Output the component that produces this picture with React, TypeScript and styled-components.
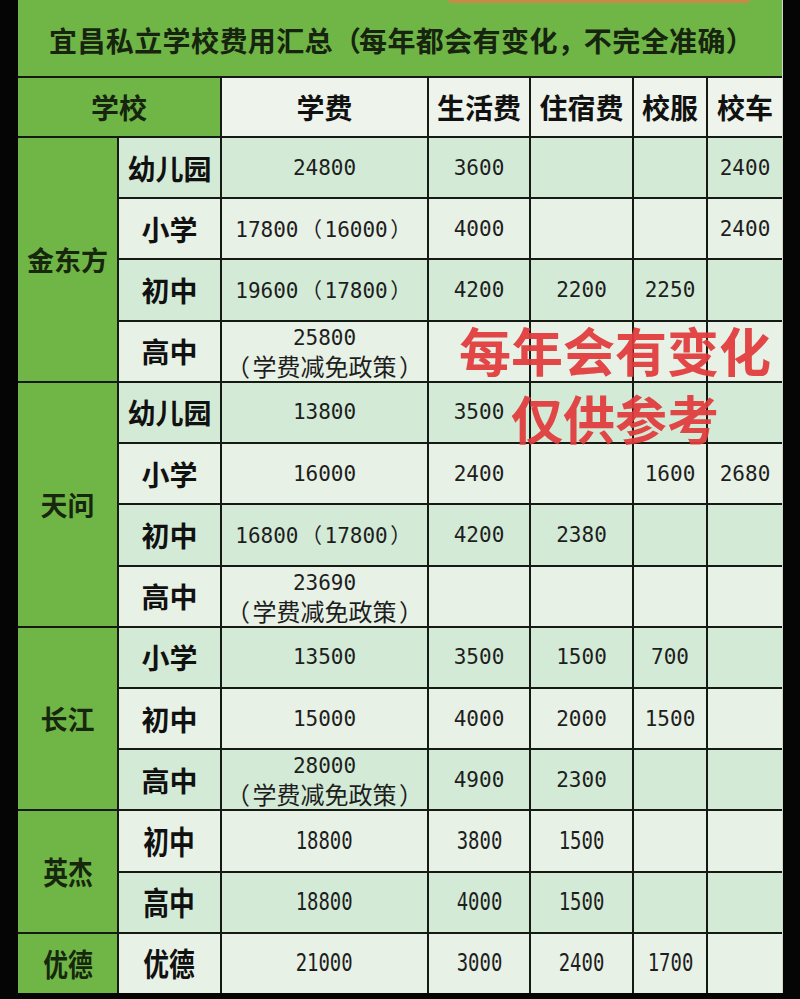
import React from "react";
import styled, { createGlobalStyle } from "styled-components";

const Global = createGlobalStyle`
  html, body { margin: 0; padding: 0; background: #000; }
  body { font-family: "Noto Sans CJK SC", "Noto Sans", sans-serif; }
`;

const Page = styled.div`
  position: relative;
  width: 800px;
  height: 999px;
  background: #050505;
  overflow: hidden;
`;

const Table = styled.div`
  margin-left: 18px;
  width: 764px;
  height: 993px;
  border-right: 1px solid #cfd6cc;
  display: grid;
  grid-template-columns: 99px 101px 205px 100px 101px 72px 74px;
  grid-template-rows: 76px 58px repeat(14, 1fr);
  gap: 2px;
  background: #161a14;
`;

const TitleBar = styled.div`
  grid-column: 1 / -1;
  background: #6fb646;
  display: flex;
  align-items: center;
  padding-left: 31px;
  padding-top: 4px;
  font-family: "Noto Sans CJK SC", sans-serif;
  font-weight: 700;
  font-size: 28px;
  letter-spacing: 0.4px;
  color: #17240f;
  white-space: nowrap;
`;

const TopStrip = styled.div`
  position: absolute;
  left: 449px;
  top: 0;
  width: 300px;
  height: 3px;
  background: #c98a45;
`;

const HeadCell = styled.div<{ $green?: boolean; $wide?: boolean }>`
  grid-column: ${(p) => (p.$wide ? "span 2" : "auto")};
  background: ${(p) => (p.$green ? "#6fb646" : "#eef4ec")};
  display: flex;
  align-items: center;
  justify-content: center;
  font-family: "Noto Sans CJK SC", sans-serif;
  font-weight: 700;
  font-size: 28px;
  color: ${(p) => (p.$green ? "#17240f" : "#111")};
  white-space: nowrap;
`;

const GroupCell = styled.div<{ $span: number }>`
  grid-row: span ${(p) => p.$span};
  background: #6fb646;
  display: flex;
  align-items: center;
  justify-content: center;
  white-space: nowrap;
`;

const GroupText = styled.span<{ $narrow?: boolean }>`
  display: inline-block;
  font-family: "Noto Sans CJK SC", sans-serif;
  font-weight: 700;
  font-size: 27px;
  color: #17270e;
  transform: ${(p) => (p.$narrow ? "scale(0.92, 1.12)" : "none")};
`;

const Cell = styled.div<{ $tone: number }>`
  background: ${(p) => (p.$tone === 0 ? "#d3ebd6" : "#e7f1e5")};
  display: flex;
  flex-direction: column;
  align-items: center;
  justify-content: center;
  color: #1c1c1c;
  white-space: nowrap;
`;

const LevelText = styled.span<{ $narrow?: boolean }>`
  display: inline-block;
  font-family: "Noto Sans CJK SC", sans-serif;
  font-weight: 700;
  font-size: 28px;
  color: #111;
  transform: ${(p) => (p.$narrow ? "scale(0.92, 1.12)" : "none")};
`;

const NumText = styled.span<{ $narrow?: boolean }>`
  display: inline-block;
  font-family: "DejaVu Sans Mono", "Noto Sans CJK SC", monospace;
  font-size: ${(p) => (p.$narrow ? "22px" : "21px")};
  line-height: 28px;
  color: #1e1e1e;
  transform: ${(p) => (p.$narrow ? "scale(0.86, 1.12)" : "none")};
`;

const NoteText = styled.span`
  font-family: "Noto Sans CJK SC", sans-serif;
  font-size: 24px;
  line-height: 27px;
  color: #1e1e1e;
`;

const Paren = styled.span<{ $w: number }>`
  display: inline-block;
  width: ${(p) => p.$w}px;
  text-align: center;
  font-family: "Noto Sans CJK SC", sans-serif;
`;

const Stamp = styled.div`
  position: absolute;
  left: 440px;
  top: 316px;
  width: 350px;
  text-align: center;
  font-family: "Noto Sans CJK SC", sans-serif;
  font-weight: 700;
  font-size: 52px;
  line-height: 68px;
  color: #e23a3b;
  opacity: 0.93;
  pointer-events: none;
`;

function withParens(text: string, w: number) {
  const parts = text.split(/([（），])/);
  return parts.map((p, i) =>
    p === "（" || p === "）" || p === "，" ? (
      <Paren key={i} $w={w}>
        {p}
      </Paren>
    ) : (
      <React.Fragment key={i}>{p}</React.Fragment>
    )
  );
}

type Row = {
  level: string;
  fee: string | [string, string];
  living?: string;
  dorm?: string;
  uniform?: string;
  bus?: string;
};

type Group = { name: string; narrow?: boolean; rows: Row[] };

const groups: Group[] = [
  {
    name: "金东方",
    rows: [
      { level: "幼儿园", fee: "24800", living: "3600", bus: "2400" },
      { level: "小学", fee: "17800（16000）", living: "4000", bus: "2400" },
      { level: "初中", fee: "19600（17800）", living: "4200", dorm: "2200", uniform: "2250" },
      { level: "高中", fee: ["25800", "（学费减免政策）"] },
    ],
  },
  {
    name: "天问",
    rows: [
      { level: "幼儿园", fee: "13800", living: "3500" },
      { level: "小学", fee: "16000", living: "2400", uniform: "1600", bus: "2680" },
      { level: "初中", fee: "16800（17800）", living: "4200", dorm: "2380" },
      { level: "高中", fee: ["23690", "（学费减免政策）"] },
    ],
  },
  {
    name: "长江",
    rows: [
      { level: "小学", fee: "13500", living: "3500", dorm: "1500", uniform: "700" },
      { level: "初中", fee: "15000", living: "4000", dorm: "2000", uniform: "1500" },
      { level: "高中", fee: ["28000", "（学费减免政策）"], living: "4900", dorm: "2300" },
    ],
  },
  {
    name: "英杰",
    narrow: true,
    rows: [
      { level: "初中", fee: "18800", living: "3800", dorm: "1500" },
      { level: "高中", fee: "18800", living: "4000", dorm: "1500" },
    ],
  },
  {
    name: "优德",
    narrow: true,
    rows: [{ level: "优德", fee: "21000", living: "3000", dorm: "2400", uniform: "1700" }],
  },
];

const headers = ["学费", "生活费", "住宿费", "校服", "校车"];

export default function App() {
  let idx = 0;
  const body: React.ReactNode[] = [];
  groups.forEach((g) => {
    body.push(
      <GroupCell key={g.name} $span={g.rows.length}>
        <GroupText $narrow={g.narrow}>{g.name}</GroupText>
      </GroupCell>
    );
    g.rows.forEach((r) => {
      const tone = idx % 2;
      const k = `${g.name}-${r.level}-${idx}`;
      idx++;
      body.push(
        <Cell key={k + "l"} $tone={tone}>
          <LevelText $narrow={g.narrow}>{r.level}</LevelText>
        </Cell>
      );
      body.push(
        <Cell key={k + "f"} $tone={tone}>
          {Array.isArray(r.fee) ? (
            <>
              <NumText>{r.fee[0]}</NumText>
              <NoteText>{withParens(r.fee[1], 29)}</NoteText>
            </>
          ) : (
            <NumText $narrow={g.narrow}>{withParens(r.fee, 26)}</NumText>
          )}
        </Cell>
      );
      [r.living, r.dorm, r.uniform, r.bus].forEach((v, i) => {
        body.push(
          <Cell key={k + i} $tone={tone}>
            {v ? <NumText $narrow={g.narrow}>{v}</NumText> : null}
          </Cell>
        );
      });
    });
  });

  return (
    <>
      <Global />
      <Page>
        <Table>
          <TitleBar>{withParens("宜昌私立学校费用汇总（每年都会有变化，不完全准确）", 26)}</TitleBar>
          <HeadCell $green $wide>
            学校
          </HeadCell>
          {headers.map((h) => (
            <HeadCell key={h}>{h}</HeadCell>
          ))}
          {body}
        </Table>
        <TopStrip />
        <Stamp>
          每年会有变化
          <br />
          仅供参考
        </Stamp>
      </Page>
    </>
  );
}
